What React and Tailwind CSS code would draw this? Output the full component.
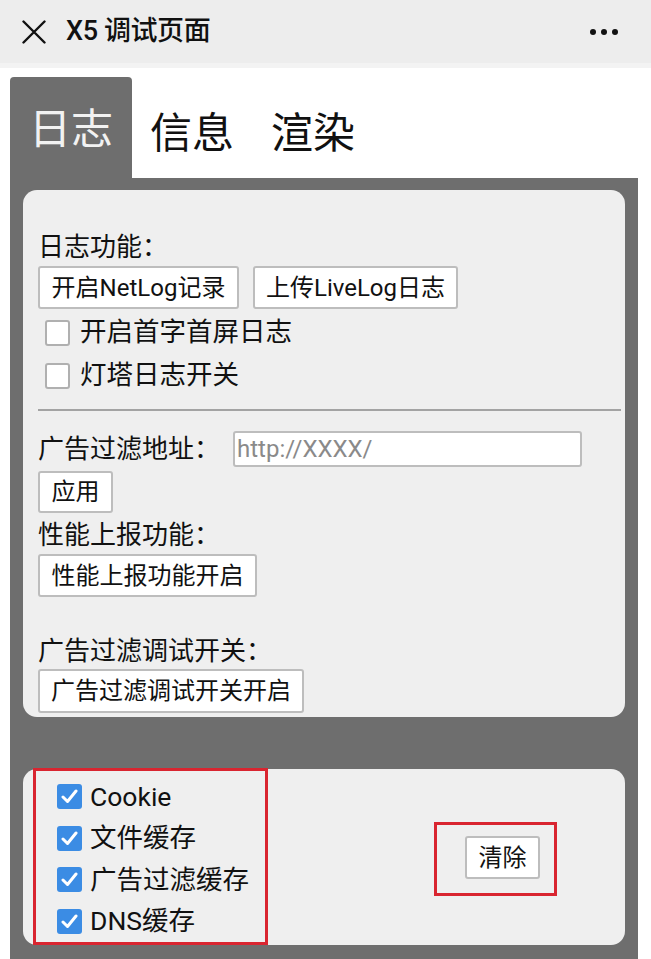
import React from "react";

const F = { fontFamily: "Roboto, 'Noto Sans CJK SC', sans-serif" };

function Btn({ children, className = "" }) {
  return (
    <div
      className={
        "inline-flex items-center justify-center whitespace-nowrap bg-white border-2 border-[#bdbdbd] rounded-[3px] text-[24px] text-[#111] leading-none " +
        className
      }
    >
      {children}
    </div>
  );
}

function Check({ checked }) {
  if (checked) {
    return (
      <div className="w-[25px] h-[25px] rounded-[3px] bg-[#3b8ce4] flex items-center justify-center shrink-0">
        <svg width="17" height="15" viewBox="0 0 17 15">
          <path d="M2 8 L6.5 12.5 L15 2" fill="none" stroke="white" strokeWidth="3" strokeLinecap="round" strokeLinejoin="round" />
        </svg>
      </div>
    );
  }
  return <div className="w-[25px] h-[26px] rounded-[3px] bg-white border-2 border-[#b0b0b0] shrink-0" />;
}

export default function App() {
  return (
    <div className="w-[651px] h-[959px] overflow-hidden bg-white text-[#111] whitespace-nowrap" style={F}>
      {/* header */}
      <div className="h-[68px] bg-[#ededed] border-b-[5px] border-[#f3f3f3] flex items-center pl-[22px] pr-[33px]">
        <svg width="24" height="24" viewBox="0 0 24 24" className="shrink-0">
          <path d="M1.5 1.5 L22.5 22.5 M22.5 1.5 L1.5 22.5" stroke="#111" strokeWidth="2.4" strokeLinecap="round" />
        </svg>
        <div className="ml-[20px] text-[27px] font-medium leading-none tracking-[-0.4px]">X5 调试页面</div>
        <div className="ml-auto flex gap-[5px] items-center">
          <div className="w-[6px] h-[6px] rounded-full bg-[#111]" />
          <div className="w-[6px] h-[6px] rounded-full bg-[#111]" />
          <div className="w-[6px] h-[6px] rounded-full bg-[#111]" />
        </div>
      </div>

      <div className="pl-[10px] pr-[13px] pt-[9px]">
        {/* tabs */}
        <div className="flex h-[101px]">
          <div className="w-[122px] bg-[#6e6e6e] rounded-t-[4px] flex items-center justify-center pt-[4px] text-[42px] text-[#f2f2f2] leading-none">
            日志
          </div>
          <div className="px-[18px] flex items-center pt-[12px] text-[42px] leading-none">信息</div>
          <div className="px-[19px] flex items-center pt-[12px] text-[42px] leading-none">渲染</div>
        </div>

        {/* gray panel */}
        <div className="bg-[#6e6e6e] px-[13px] pt-[12px] h-[781px]">
          {/* card 1 */}
          <div className="bg-[#efefef] rounded-[14px] pl-[15px] pr-[4px] pt-[42px] pb-[4px] flex flex-col items-start">
            <div className="h-[30px] flex items-center text-[26px]">日志功能：</div>
            <div className="mt-[4px] flex gap-[14px]">
              <Btn className="h-[43px] w-[201px]">开启NetLog记录</Btn>
              <Btn className="h-[43px] w-[205px]">上传LiveLog日志</Btn>
            </div>
            <div className="mt-[2px] h-[43px] flex items-center pl-[7px] gap-[10px]">
              <Check />
              <span className="text-[26.5px] leading-none">开启首字首屏日志</span>
            </div>
            <div className="h-[43px] flex items-center pl-[7px] gap-[10px]">
              <Check />
              <span className="text-[26.5px] leading-none">灯塔日志开关</span>
            </div>
            <div className="mt-[12px] h-[2px] w-full bg-[#a3a3a3]" />
            <div className="mt-[20px] h-[36px] flex items-center">
              <span className="text-[26px] w-[195px]">广告过滤地址：</span>
              <div className="w-[349px] h-[36px] bg-white border-2 border-[#bdbdbd] rounded-[3px] flex items-center pl-[2px] text-[24px] text-[#8a8a8a]">
                http://XXXX/
              </div>
            </div>
            <Btn className="mt-[4px] h-[42px] w-[75px]">应用</Btn>
            <div className="mt-[7px] h-[30px] flex items-center text-[26px]">性能上报功能：</div>
            <Btn className="mt-[4px] h-[43px] w-[219px]">性能上报功能开启</Btn>
            <div className="mt-[39px] h-[30px] flex items-center text-[26px]">广告过滤调试开关：</div>
            <Btn className="mt-[3px] h-[44px] w-[266px]">广告过滤调试开关开启</Btn>
          </div>

          {/* card 2 */}
          <div className="mt-[52px] bg-[#efefef] rounded-[14px] h-[176px] pl-[10px] flex items-start">
            <div className="-mt-[1px] w-[235px] h-[177px] border-[3px] border-[#d92530] pt-[5px] pl-[21px] flex flex-col">
              {["Cookie", "文件缓存", "广告过滤缓存", "DNS缓存"].map((t) => (
                <div key={t} className="h-[42px] flex items-center gap-[8px]">
                  <Check checked />
                  <span className="text-[26.5px] leading-none">{t}</span>
                </div>
              ))}
            </div>
            <div className="ml-[166px] mt-[53px] w-[123px] h-[74px] border-[3px] border-[#d92530] pl-[28px] pt-[11px]">
              <Btn className="h-[43px] w-[75px]">清除</Btn>
            </div>
          </div>
        </div>
      </div>
    </div>
  );
}
